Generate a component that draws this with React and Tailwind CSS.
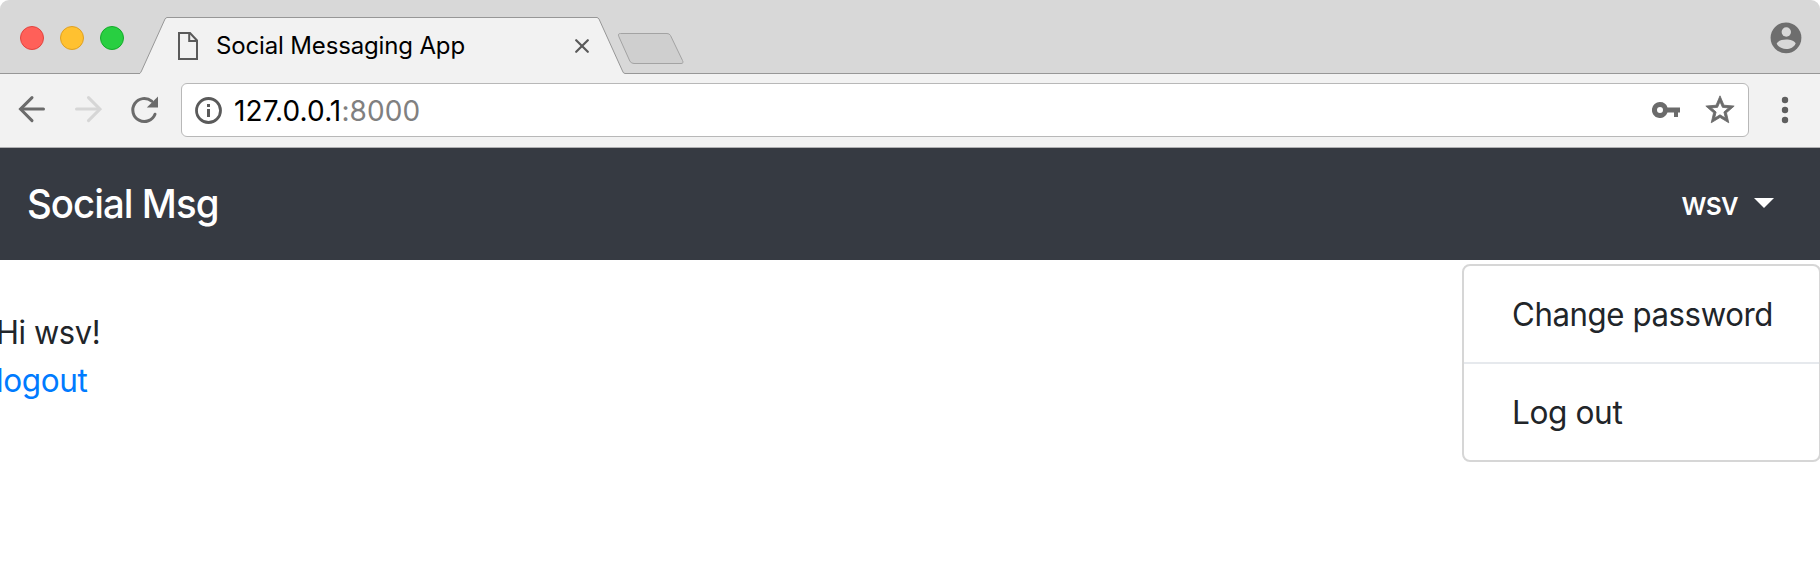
function TabStrip() {
  return (
    <div className="flex h-[74px] overflow-hidden rounded-t-[9px] bg-[#d8d8d8]">
      <div className="flex w-[140px] shrink-0 gap-4 border-b border-[#979797] pt-[26px] pl-5">
        <span className="size-6 rounded-full border border-[#e2443f] bg-[#ff6059]" />
        <span className="size-6 rounded-full border border-[#dfa023] bg-[#ffc130]" />
        <span className="size-6 rounded-full border border-[#14ab2a] bg-[#28cf41]" />
      </div>
      <svg className="mt-[17px] h-[57px] w-[27px] shrink-0" viewBox="0 0 27 57" fill="none">
        <path d="M0 57V56.5L1.5 54L25 2Q25.7 .5 27 .5V57Z" fill="#f2f2f2" />
        <path d="M-1 56.5Q.8 56.2 1.5 54L25 2Q25.7 .5 27.5 .5" stroke="#979797" />
      </svg>
      <div className="mt-[17px] flex h-[57px] w-[430px] shrink-0 items-center border-t border-[#979797] bg-[#f2f2f2] pl-[11px]">
        <svg className="h-7 w-5 shrink-0" viewBox="0 0 20 28" fill="none" stroke="#5a5a5a" strokeWidth="2">
          <path d="M1 1H12L19 8.500V27H1Z" />
          <path d="M11.200 1V9H19" />
        </svg>
        <span className="ml-[18px] text-2xl leading-none tracking-[-0.15px] whitespace-nowrap text-black">
          Social Messaging App
        </span>
        <svg className="mr-2 ml-auto size-[14px] shrink-0" viewBox="0 0 14 14" stroke="#5a5a5a" strokeWidth="2.200" strokeLinecap="round">
          <path d="M1.200 1.200L12.800 12.800M12.800 1.200L1.200 12.800" />
        </svg>
      </div>
      <svg className="mt-[17px] h-[57px] w-[88px] shrink-0" viewBox="0 0 88 57" fill="none" stroke="#979797">
        <path d="M0 .5Q1.300 .5 2 2L25.500 54Q26.300 56.500 28 56.500V57H0Z" fill="#f2f2f2" stroke="none" />
        <path d="M28 56.500H88V57H28Z" fill="#f2f2f2" stroke="none" />
        <path d="M-.5 .5Q1.300 .5 2 2L25.500 54Q26.300 56.500 28 56.500H88" />
        <path
          d="M23.500 16.500H70Q72.500 16.500 73.500 18.500L85.500 43.500Q87 46.500 84 46.500H37Q34 46.500 32.800 44L21.800 19.500Q20.500 16.500 23.500 16.500Z"
          fill="#cfcfcf"
          stroke="#a3a3a3"
        />
      </svg>
      <div className="flex flex-1 justify-end border-b border-[#979797] pt-[22px] pr-[18px]">
        <svg className="size-8" viewBox="0 0 32 32">
          <circle cx="16" cy="15.800" r="15.400" fill="#6e6e6e" />
          <circle cx="16.300" cy="10" r="4.700" fill="#d8d8d8" />
          <path d="M6.700 21.500C8 18.800 12 17.600 16.200 17.600S24.400 18.800 25.700 21.500C24 25.200 20.300 27 16.200 27S8.400 25.200 6.700 21.500Z" fill="#d8d8d8" />
        </svg>
      </div>
    </div>
  );
}

function Toolbar() {
  return (
    <div className="flex h-[74px] items-center border-b border-[#b0b0b2] bg-[#f2f2f2] pb-px pl-[18px]">
      <svg className="h-8 w-7 shrink-0" viewBox="0 0 28 32" fill="none" stroke="#6b6b6b" strokeWidth="3" strokeLinecap="round">
        <path d="M14 3.600L2.500 15.100L14 26.600" strokeLinejoin="miter" />
        <path d="M3 15.100H25.500" />
      </svg>
      <svg className="ml-7 h-8 w-7 shrink-0" viewBox="0 0 28 32" fill="none" stroke="#d6d6d6" strokeWidth="3" strokeLinecap="round">
        <path d="M14.500 3.600L26 15.100L14.500 26.600" />
        <path d="M2.500 15.100H25" />
      </svg>
      <svg className="ml-7 h-8 w-[30px] shrink-0" viewBox="0 0 30 32" fill="none">
        <path d="M25 20.200A11.500 11.500 0 1 1 21.700 7.200" stroke="#6b6b6b" strokeWidth="3" strokeLinecap="round" />
        <path d="M28 2.500V13.500H16.800Z" fill="#6b6b6b" />
      </svg>
      <div className="ml-[21px] flex h-[54px] w-[1568px] shrink-0 items-center rounded-[6px] border border-[#b8b8b8] bg-white pr-[11px] pl-[13px]">
        <svg className="size-7 shrink-0" viewBox="0 0 28 28" fill="none">
          <circle cx="13.500" cy="14.500" r="12" stroke="#5a5a5a" strokeWidth="2.800" />
          <path d="M12 8h3v3h-3zM12 13h3v8h-3z" fill="#5a5a5a" />
        </svg>
        <span className="mt-0.5 ml-[11px] text-[28px] leading-none tracking-[0.1px] text-black">
          127.0.0.1<span className="text-[#808080]">:8000</span>
        </span>
        <svg className="mt-[-1px] ml-auto h-4 w-7 shrink-0" viewBox="0 0 28 16" fill="#6b6b6b" fillRule="evenodd">
          <path d="M8 0A8 8 0 1 0 15.500 10.500H22V15H26V10.500H28V5.500H15.500A8 8 0 0 0 8 0ZM8 5A3 3 0 1 1 8 11A3 3 0 1 1 8 5Z" />
        </svg>
        <svg className="ml-[23px] size-[34px] shrink-0" viewBox="0 0 24 24" fill="#6b6b6b" stroke="#6b6b6b" strokeWidth="0.6">
          <path d="m22 9.240-7.190-.62L12 2 9.190 8.630 2 9.240l5.460 4.730L5.820 21 12 17.270 18.180 21l-1.630-7.030zM12 15.400l-3.760 2.270 1-4.280-3.320-2.880 4.380-.38L12 6.100l1.710 4.040 4.380.38-3.320 2.880 1 4.280z" />
        </svg>
      </div>
      <svg className="ml-[32px] h-7 w-2 shrink-0" viewBox="0 0 8 28" fill="#5f5f5f">
        <circle cx="4" cy="4" r="3.200" />
        <circle cx="4" cy="14" r="3.200" />
        <circle cx="4" cy="24" r="3.200" />
      </svg>
    </div>
  );
}

function Navbar() {
  return (
    <nav className="flex h-28 items-center justify-between bg-[#363a42] pr-[46px] pl-[27px] text-white">
      <a className="origin-left scale-x-[0.96] text-[40px] leading-none font-[450] tracking-[-1px]">Social Msg</a>
      <div className="flex items-center">
        <span className="mt-[-2px] origin-right scale-x-[0.93] text-[33px] leading-none font-medium tracking-[-1.2px]">wsv</span>
        <svg className="mt-[-2px] ml-[17px] h-[10px] w-5" viewBox="0 0 20 10" fill="white">
          <path d="M0 0H20L10 10Z" />
        </svg>
      </div>
    </nav>
  );
}

export default function App() {
  return (
    <div className="h-[576px] w-[1820px] overflow-hidden bg-white font-['Inter',sans-serif] text-[#212529]">
      <TabStrip />
      <Toolbar />
      <Navbar />
      <main className="flex items-start justify-between text-[32px] tracking-[-0.4px]">
        <div className="mt-[49px] -ml-1 leading-[48px]">
          <p className="origin-left scale-x-[0.965]">Hi wsv!</p>
          <a className="block origin-left scale-x-[0.985] text-[#007bff]">logout</a>
        </div>
        <div className="mt-1 -mr-px w-[359px] rounded-lg border-2 border-[#d6d6d6] bg-white leading-[98px] whitespace-nowrap">
          <a className="block h-24 pl-12">
            <span className="inline-block origin-left scale-x-[0.974]">Change password</span>
          </a>
          <hr className="h-0.5 border-0 bg-[#e6e9ed]" />
          <a className="block h-24 pl-12">
            <span className="inline-block origin-left scale-x-[0.988]">Log out</span>
          </a>
        </div>
      </main>
    </div>
  );
}
